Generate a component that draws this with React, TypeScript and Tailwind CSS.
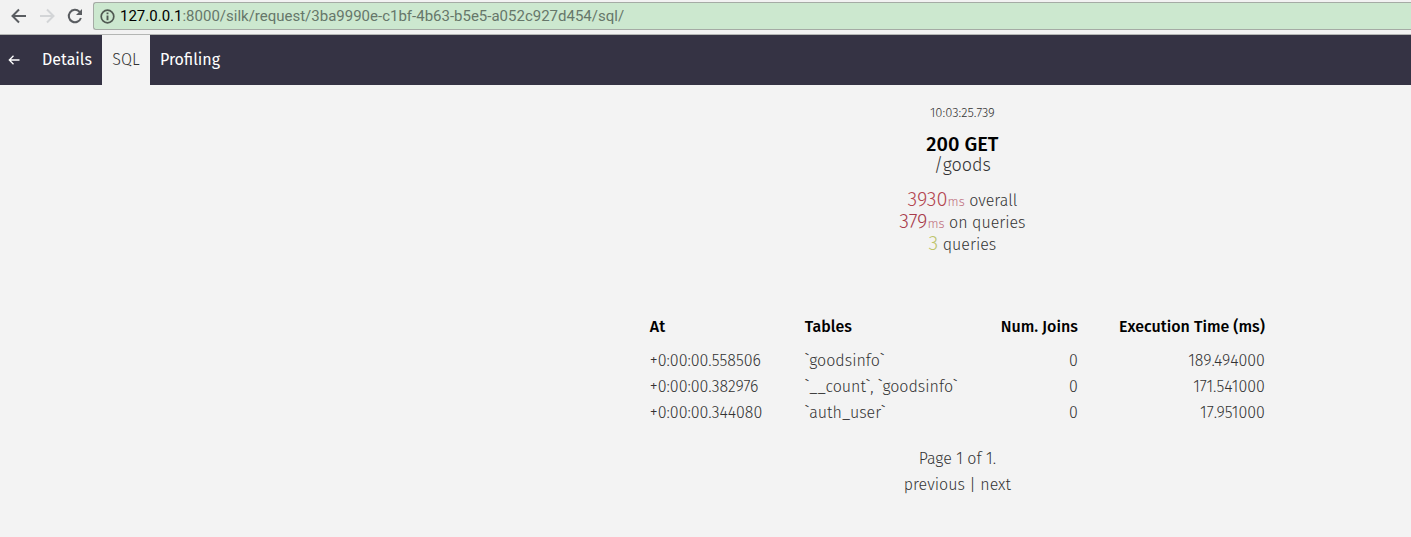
import React from "react";

type Query = { at: string; tables: string; joins: number; time: string };

const queries: Query[] = [
  { at: "+0:00:00.558506", tables: "`goodsinfo`", joins: 0, time: "189.494000" },
  { at: "+0:00:00.382976", tables: "`__count`, `goodsinfo`", joins: 0, time: "171.541000" },
  { at: "+0:00:00.344080", tables: "`auth_user`", joins: 0, time: "17.951000" },
];

function BrowserBar() {
  return (
    <header className="flex h-[35px] items-start border-b border-[#b4b6b4] bg-[#f2f2f2] pt-[2px] font-['Roboto','Noto_Sans',sans-serif]">
      <div className="flex h-7 w-[93px] shrink-0 items-center gap-3 pl-[11px]">
        <button type="button" aria-label="Back" className="text-[#5a5d61]">
          <svg className="h-4 w-4" viewBox="0 0 16 16" fill="none" stroke="currentColor" strokeWidth="2">
            <path d="M15 8H2.5M8 1.5L1.5 8L8 14.5" />
          </svg>
        </button>
        <button type="button" aria-label="Forward" className="text-[#d3d5d7]">
          <svg className="h-4 w-4" viewBox="0 0 16 16" fill="none" stroke="currentColor" strokeWidth="2">
            <path d="M1 8H13.5M8 1.5L14.5 8L8 14.5" />
          </svg>
        </button>
        <button type="button" aria-label="Reload" className="text-[#5a5d61]">
          <svg className="h-4 w-4" viewBox="0 0 16 16" fill="none" stroke="currentColor" strokeWidth="2">
            <path d="M13.9 10A6.2 6.2 0 1 1 12.4 3.6L13.6 4.8" />
            <path d="M15 1V7H9Z" fill="currentColor" stroke="none" />
          </svg>
        </button>
      </div>
      <div className="flex h-7 min-w-0 flex-1 items-center gap-[5px] rounded-l-[3px] border border-r-0 border-[#a5aba5] bg-[#cce8cf] pl-[6px]">
        <svg className="h-[15px] w-[15px] shrink-0" viewBox="0 0 15 15" fill="none" stroke="#505a52">
          <circle cx="7.5" cy="7.5" r="6.3" strokeWidth="1.7" />
          <path d="M7.5 6.5V11.2M7.5 3.6V5.3" strokeWidth="1.9" />
        </svg>
        <div className="truncate text-[15px] leading-5 text-[#66776a]">
          <span className="text-black">127.0.0.1</span>:8000/silk/request/3ba9990e-c1bf-4b63-b5e5-a052c927d454/sql/
        </div>
      </div>
    </header>
  );
}

function Navigation() {
  return (
    <nav className="flex h-[50px] items-stretch bg-[#353344] text-base text-white">
      <a href="#back" aria-label="Back to requests" className="flex w-8 items-center pl-2">
        <svg className="h-3 w-3" viewBox="0 0 12 12" fill="none" stroke="currentColor" strokeWidth="1.3">
          <path d="M11.5 6H1.5M5.5 1.8L1.3 6L5.5 10.2" />
        </svg>
      </a>
      <a href="#details" className="flex w-[70px] items-center justify-center">Details</a>
      <a href="#sql" aria-current="page" className="flex w-12 items-center justify-center bg-[#f3f3f3] font-light text-[#333333]">SQL</a>
      <a href="#profiling" className="flex w-20 items-center justify-center">Profiling</a>
    </nav>
  );
}

function Summary() {
  return (
    <section className="pl-[10px] text-center text-base leading-[22px] text-[#333333]">
      <div className="text-[13px] leading-4">10:03:25.739</div>
      <h1 className="mt-3 text-xl leading-[22px] font-medium text-black">200 GET</h1>
      <div className="text-lg leading-5">/goods</div>
      <div className="mt-[14px]">
        <div className="h-[22px]"><span className="text-xl leading-none text-[#b3454f]">3930</span><span className="text-[13px] leading-none text-[#bf7080]">ms</span> overall</div>
        <div className="h-[22px]"><span className="text-xl leading-none text-[#a83b4b]">379</span><span className="text-[13px] leading-none text-[#bf7080]">ms</span> on queries</div>
        <div className="h-[22px]"><span className="text-xl leading-none text-[#bdc46a]">3</span> queries</div>
      </div>
    </section>
  );
}

function QueryTable() {
  return (
    <table className="mx-auto mt-[51px] w-[655px] table-fixed text-left text-base leading-[26px] text-[#333333]">
      <colgroup>
        <col className="w-[155px]" />
        <col className="w-[195px]" />
        <col className="w-[118px]" />
        <col className="w-[187px]" />
      </colgroup>
      <thead className="whitespace-nowrap text-black">
        <tr className="h-[42px]">
          <th className="px-5 font-medium">At</th>
          <th className="px-5 font-medium">Tables</th>
          <th className="pr-5 text-right font-medium">Num. Joins</th>
          <th className="pr-5 text-right font-medium">Execution Time (ms)</th>
        </tr>
      </thead>
      <tbody className="whitespace-nowrap">
        {queries.map((q) => (
          <tr key={q.at}>
            <td className="px-5">{q.at}</td>
            <td className="px-5">{q.tables}</td>
            <td className="px-5 text-right">{q.joins}</td>
            <td className="px-5 text-right">{q.time}</td>
          </tr>
        ))}
      </tbody>
    </table>
  );
}

export default function App() {
  return (
    <div className="min-h-screen bg-[#f3f3f3] font-['Fira_Sans','Noto_Sans',sans-serif]">
      <BrowserBar />
      <Navigation />
      <main className="ml-[35.7%] pt-5 pb-10 font-light">
        <Summary />
        <QueryTable />
        <div className="mt-5 text-center text-base leading-[26px] text-[#333333]">
          <div>Page 1 of 1.</div>
          <div><a href="#previous">previous</a> | <a href="#next">next</a></div>
        </div>
      </main>
    </div>
  );
}
